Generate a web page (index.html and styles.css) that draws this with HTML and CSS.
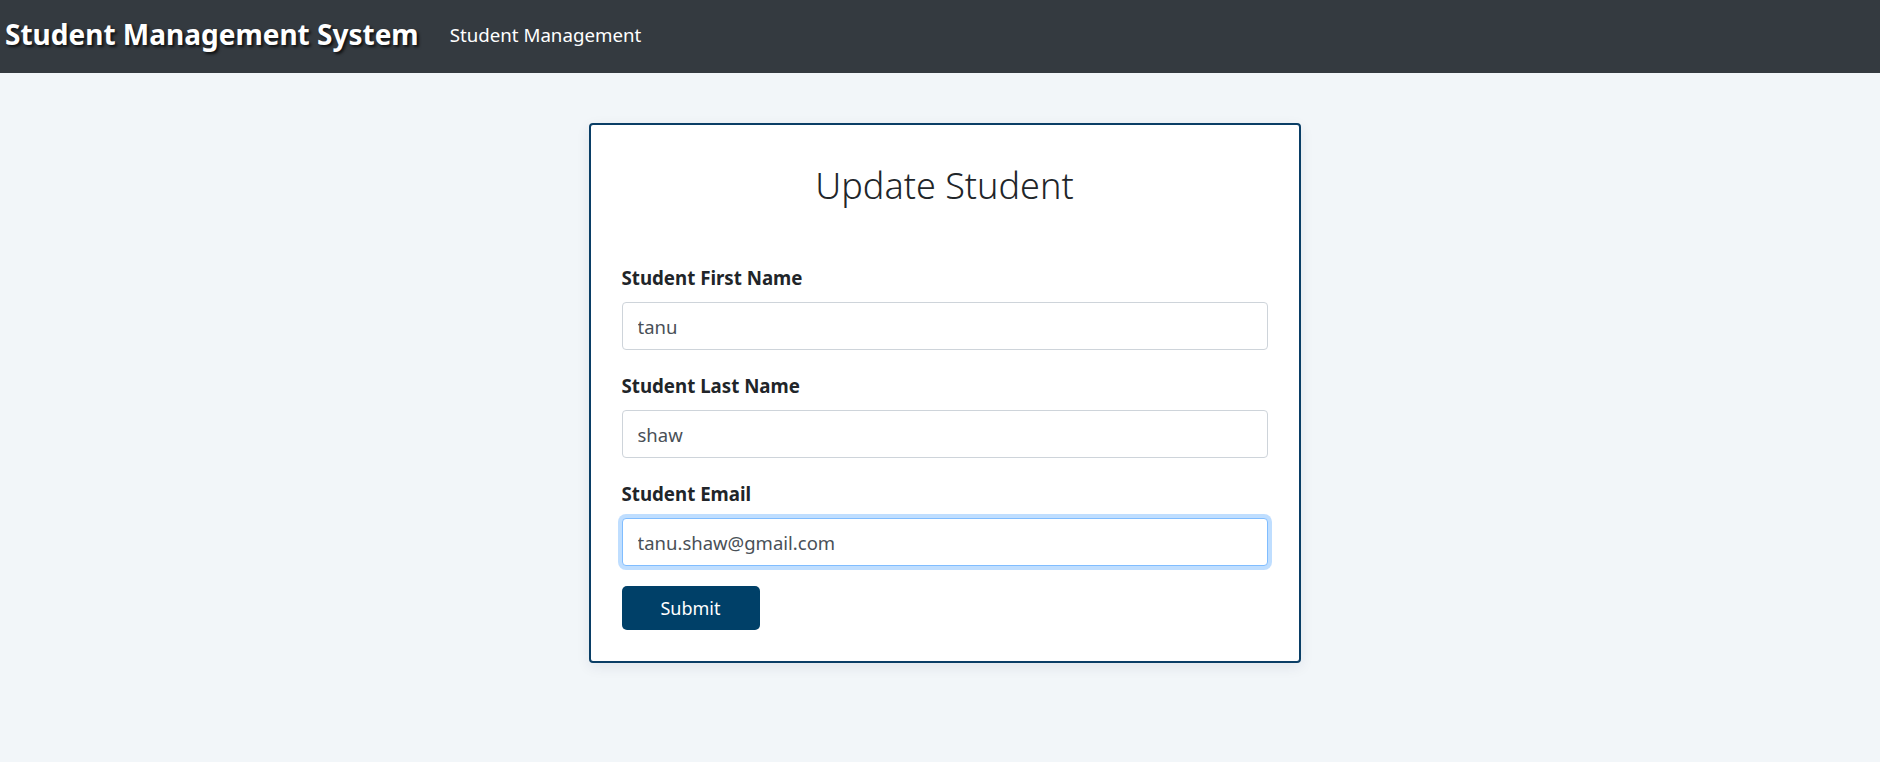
FILE: index.html
```html
<!DOCTYPE html>
<html lang="en">
<head>
<meta charset="utf-8">
<title>Student Management System</title>
<link rel="stylesheet" href="styles.css">
</head>
<body>
<header class="navbar">
  <span class="brand">Student Management System</span>
  <a class="nav-link" href="#">Student Management</a>
</header>
<main class="page">
  <section class="card">
    <h2 class="card-title">Update Student</h2>
    <form class="form">
      <div class="form-group">
        <label class="form-label">Student First Name</label>
        <input class="form-input" type="text" value="tanu">
      </div>
      <div class="form-group">
        <label class="form-label">Student Last Name</label>
        <input class="form-input" type="text" value="shaw">
      </div>
      <div class="form-group">
        <label class="form-label">Student Email</label>
        <input class="form-input focused" type="text" value="tanu.shaw@gmail.com">
      </div>
      <button class="btn-submit" type="button">Submit</button>
    </form>
  </section>
</main>
</body>
</html>
```
FILE: styles.css
```css
* { box-sizing: border-box; }
html, body { margin: 0; padding: 0; }
body {
  background: #f2f6f9;
  font-family: "Noto Sans", "Open Sans", sans-serif;
  color: #212529;
  height: 762px;
  overflow: hidden;
}
.navbar {
  height: 73px;
  background: #343a40;
  display: flex;
  align-items: center;
  padding: 0 5px 5px;
}
.brand {
  color: #ffffff;
  font-weight: 700;
  font-size: 28px;
  text-shadow: 2px 2px 3px rgba(0, 0, 0, 0.75);
  margin-right: 31px;
}
.nav-link {
  color: #ffffff;
  text-decoration: none;
  font-size: 18.7px;
}
.page {
  display: flex;
  justify-content: center;
  padding: 50px 0 0 9px;
}
.card {
  width: 712px;
  background: #ffffff;
  border: 2px solid #0a3e66;
  border-radius: 4px;
  box-shadow: 0 4px 14px rgba(0, 40, 80, 0.08);
  padding: 37px 31px 31px;
}
.card-title {
  margin: 0 0 54px;
  text-align: center;
  font-weight: 300;
  font-size: 36px;
  line-height: 48px;
  color: #212529;
}
.form-group { margin-bottom: 22px; }
.form-group:last-of-type { margin-bottom: 20px; }
.form-label {
  display: block;
  font-weight: 700;
  font-size: 18.7px;
  line-height: 28px;
  margin-bottom: 10px;
  color: #212529;
}
.form-input {
  display: block;
  width: 100%;
  height: 48px;
  padding: 0 15px;
  border: 1px solid #ced4da;
  border-radius: 4px;
  font-family: inherit;
  font-size: 18.5px;
  color: #495057;
  background: #fff;
  outline: none;
}
.form-input.focused {
  border-color: #80bdff;
  box-shadow: 0 0 0 4px rgba(0, 123, 255, 0.25);
}
.btn-submit {
  width: 138px;
  height: 44px;
  border: none;
  border-radius: 5px;
  background: #004068;
  color: #ffffff;
  font-family: inherit;
  font-size: 18px;
  cursor: pointer;
}
```
